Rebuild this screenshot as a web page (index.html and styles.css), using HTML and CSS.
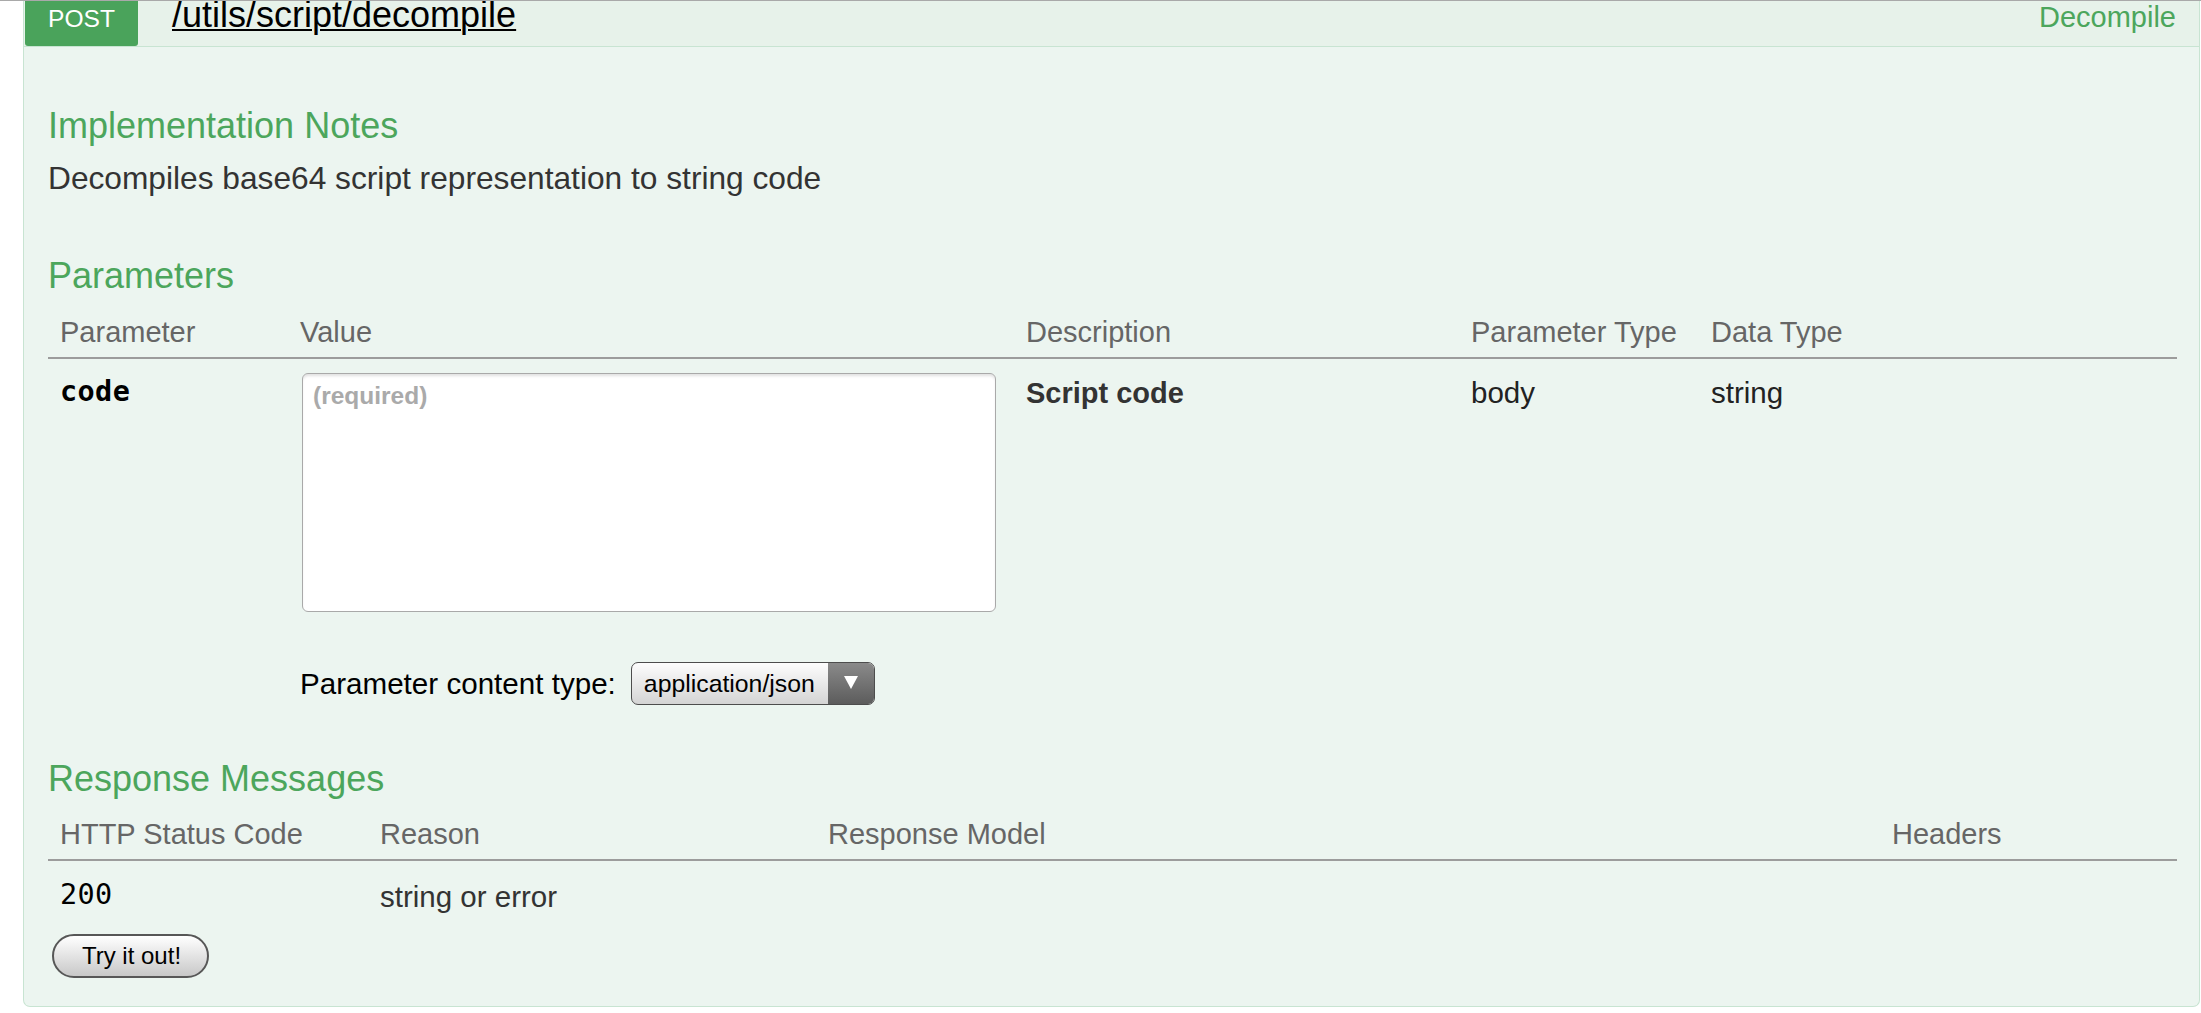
FILE: index.html
```html
<!DOCTYPE html>
<html lang="en">
<head>
<meta charset="utf-8">
<title>/utils/script/decompile</title>
<link rel="stylesheet" href="styles.css">
</head>
<body>
<div class="operation">
  <div class="heading">
    <span class="method">POST</span>
    <a class="path" href="#">/utils/script/decompile</a>
    <span class="summary">Decompile</span>
  </div>
  <div class="content">
    <h4 class="title notes-title">Implementation Notes</h4>
    <p class="notes">Decompiles base64 script representation to string code</p>

    <h4 class="title params-title">Parameters</h4>
    <table class="grid params">
      <colgroup>
        <col class="p1"><col class="p2"><col class="p3"><col class="p4"><col>
      </colgroup>
      <thead>
        <tr><th>Parameter</th><th>Value</th><th>Description</th><th>Parameter Type</th><th>Data Type</th></tr>
      </thead>
      <tbody>
        <tr>
          <td class="code">code</td>
          <td class="value">
            <textarea class="body-input" placeholder="(required)"></textarea>
            <div class="content-type">
              <label class="ct-label">Parameter content type:</label>
              <div class="select">
                <span class="select-text">application/json</span>
                <span class="select-arrow"></span>
              </div>
            </div>
          </td>
          <td class="desc">Script code</td>
          <td class="plain">body</td>
          <td class="plain">string</td>
        </tr>
      </tbody>
    </table>

    <h4 class="title resp-title">Response Messages</h4>
    <table class="grid responses">
      <colgroup>
        <col class="r1"><col class="r2"><col class="r3"><col>
      </colgroup>
      <thead>
        <tr><th>HTTP Status Code</th><th>Reason</th><th>Response Model</th><th>Headers</th></tr>
      </thead>
      <tbody>
        <tr>
          <td class="code">200</td>
          <td class="reason">string or error</td>
          <td></td>
          <td></td>
        </tr>
      </tbody>
    </table>

    <button class="try" type="button">Try it out!</button>
  </div>
</div>
</body>
</html>
```

FILE: styles.css
```css
html, body {
  margin: 0;
  padding: 0;
  background: #ffffff;
}

body {
  border-top: 1px solid #a9a9a9;
  font-family: "Liberation Sans", Arial, Helvetica, sans-serif;
  color: #333333;
}

.operation {
  margin: 0 1px 0 23px;
}

/* ---------- heading bar ---------- */
.heading {
  display: flex;
  align-items: flex-start;
  height: 45px;
  background: #e7f2ea;
  border: 1px solid #c8e4d2;
  border-top: none;
  overflow: hidden;
}

.method {
  margin-left: 1px;
  width: 113px;
  height: 45px;
  background: #4aa35b;
  color: #ffffff;
  font-size: 24.6px;
  line-height: 35px;
  text-align: center;
  border-radius: 0 0 3px 3px;
}

.path {
  margin-left: 34px;
  font-size: 36px;
  line-height: 28px;
  color: #000000;
  text-decoration: underline;
  text-underline-offset: 2px;
  text-decoration-thickness: 2px;
}

.summary {
  margin-left: auto;
  margin-right: 23px;
  font-size: 29px;
  line-height: 32px;
  color: #4ca65c;
}

/* ---------- content ---------- */
.content {
  background: #ecf5f0;
  border: 1px solid #c8e4d2;
  border-top: none;
  border-radius: 0 0 7px 7px;
  padding: 59px 22px 28px 24px;
}

.title {
  margin: 0;
  font-size: 36px;
  line-height: 40px;
  font-weight: normal;
  color: #4ca65c;
}

.notes {
  margin: 14px 0 0;
  font-size: 31.7px;
  line-height: 36px;
  color: #333333;
}

.params-title {
  margin-top: 60px;
}

.resp-title {
  margin-top: 42px;
}

/* ---------- tables ---------- */
.grid {
  width: 100%;
  table-layout: fixed;
  border-collapse: collapse;
}

.params {
  margin-top: 19px;
}

.responses {
  margin-top: 18px;
}

.p1 { width: 240px; }
.p2 { width: 726px; }
.p3 { width: 445px; }
.p4 { width: 240px; }

.r1 { width: 320px; }
.r2 { width: 448px; }
.r3 { width: 1064px; }

.grid th {
  padding: 0 12px 8px;
  font-size: 29px;
  line-height: 34px;
  font-weight: normal;
  color: #666666;
  text-align: left;
  white-space: nowrap;
  border-bottom: 2px solid #9c9c9c;
}

.grid td {
  padding: 14px 12px 12px;
  vertical-align: top;
  font-size: 29.5px;
  line-height: 40px;
  color: #222222;
}

.grid td.code {
  padding-top: 16px;
  font-family: "DejaVu Sans Mono", "Liberation Mono", monospace;
  font-weight: bold;
  font-size: 28.5px;
  line-height: 34px;
  letter-spacing: 0.4px;
  color: #000000;
}

.responses td.code {
  padding-top: 17px;
  font-weight: normal;
}

.grid td.desc {
  font-size: 29px;
  font-weight: bold;
  color: #333333;
}

.responses td {
  padding-bottom: 0;
}

.responses td.reason {
  padding-top: 16px;
  color: #333333;
}

/* ---------- value cell ---------- */
.grid td.value {
  padding-left: 14px;
}

.body-input {
  display: block;
  box-sizing: border-box;
  width: 694px;
  height: 239px;
  margin: 0;
  padding: 8px 10px;
  border: 1.5px solid #a9a9a9;
  border-radius: 6px;
  background: #ffffff;
  box-shadow: inset 0 3px 3px -1px rgba(0, 0, 0, 0.12);
  font-family: "Liberation Sans", Arial, sans-serif;
  font-size: 24.5px;
  resize: none;
  outline: none;
}

.body-input::placeholder {
  color: #aaaaaa;
  font-weight: bold;
}

.content-type {
  display: flex;
  align-items: center;
  margin-top: 50px;
  margin-left: -2px;
}

.ct-label {
  font-size: 29.6px;
  line-height: 34px;
  color: #000000;
}

.select {
  display: flex;
  box-sizing: border-box;
  width: 244px;
  height: 43px;
  margin-left: 15px;
  border: 1.5px solid #4d4d4d;
  border-radius: 7px;
  overflow: hidden;
  background: linear-gradient(#fdfdfd, #d4d4d4);
}

.select-text {
  flex: 1;
  padding-left: 12px;
  padding-top: 2px;
  font-size: 24.8px;
  line-height: 38px;
  color: #000000;
  white-space: nowrap;
}

.select-arrow {
  display: flex;
  align-items: center;
  justify-content: center;
  width: 46px;
  background: linear-gradient(#8a8a8a, #5c5c5c);
}

.select-arrow::after {
  content: "";
  width: 0;
  height: 0;
  border-left: 7px solid transparent;
  border-right: 7px solid transparent;
  border-top: 13px solid #ffffff;
  margin-top: -2px;
}

/* ---------- button ---------- */
.try {
  display: block;
  box-sizing: border-box;
  width: 157px;
  height: 44px;
  margin: 17px 0 0 4px;
  padding: 0 0 0 2px;
  border: 2px solid #575757;
  border-radius: 22px;
  background: linear-gradient(#ffffff, #c8c8c8);
  font-family: "Liberation Sans", Arial, sans-serif;
  font-size: 24px;
  color: #000000;
  cursor: pointer;
}
```
